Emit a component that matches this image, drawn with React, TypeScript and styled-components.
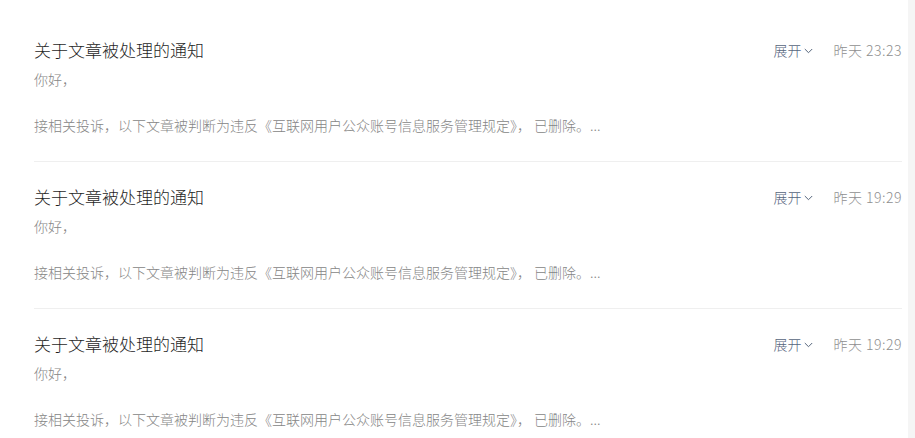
import styled, { createGlobalStyle } from 'styled-components';

const GlobalStyle = createGlobalStyle`
  html, body {
    margin: 0;
    padding: 0;
    background-color: #f5f5f5;
  }
  body {
    font-family: "Noto Sans CJK SC", "Noto Sans", sans-serif;
  }
`;

const Page = styled.div`
  width: 908px;
  min-height: 438px;
  background-color: #fff;
  padding: 15px 6px 0 34px;
  box-sizing: border-box;
`;

const Item = styled.div`
  padding: 23px 0 24px;
  border-bottom: 1px solid #efefef;

  &:last-child {
    border-bottom: none;
  }
`;

const Head = styled.div`
  display: flex;
  align-items: center;
  height: 24px;
`;

const Title = styled.h3`
  flex: 1;
  margin: 0;
  font-size: 17px;
  font-weight: 300;
  line-height: 24px;
  color: #1f1f1f;
`;

const Toggle = styled.span`
  display: flex;
  align-items: center;
  gap: 3px;
  font-size: 14px;
  font-weight: 300;
  color: #56657c;
  cursor: pointer;
`;

const Time = styled.span`
  margin-left: 20px;
  font-size: 14px;
  font-weight: 300;
  letter-spacing: 0.5px;
  color: #8f8f8f;
`;

const Body = styled.div`
  margin-top: 6px;
  font-size: 14px;
  font-weight: 300;
  line-height: 23px;
  color: #868686;
`;

const Chevron = () => (
  <svg width="9" height="6" viewBox="0 0 9 6" fill="none" style={{ marginTop: 2 }}>
    <path d="M0.8 1 L4.5 4.7 L8.2 1" stroke="#56657c" strokeWidth="1" />
  </svg>
);

const notices = [
  { time: '昨天 23:23' },
  { time: '昨天 19:29' },
  { time: '昨天 19:29' },
];

const App = () => {
  return (
    <>
      <GlobalStyle />
      <Page>
        {notices.map((n, i) => (
          <Item key={i}>
            <Head>
              <Title>关于文章被处理的通知</Title>
              <Toggle>
                展开
                <Chevron />
              </Toggle>
              <Time>{n.time}</Time>
            </Head>
            <Body>
              你好，
              <br />
              <br />
              接相关投诉，以下文章被判断为违反《互联网用户公众账号信息服务管理规定》， 已删除。...
            </Body>
          </Item>
        ))}
      </Page>
    </>
  );
};

export default App;
